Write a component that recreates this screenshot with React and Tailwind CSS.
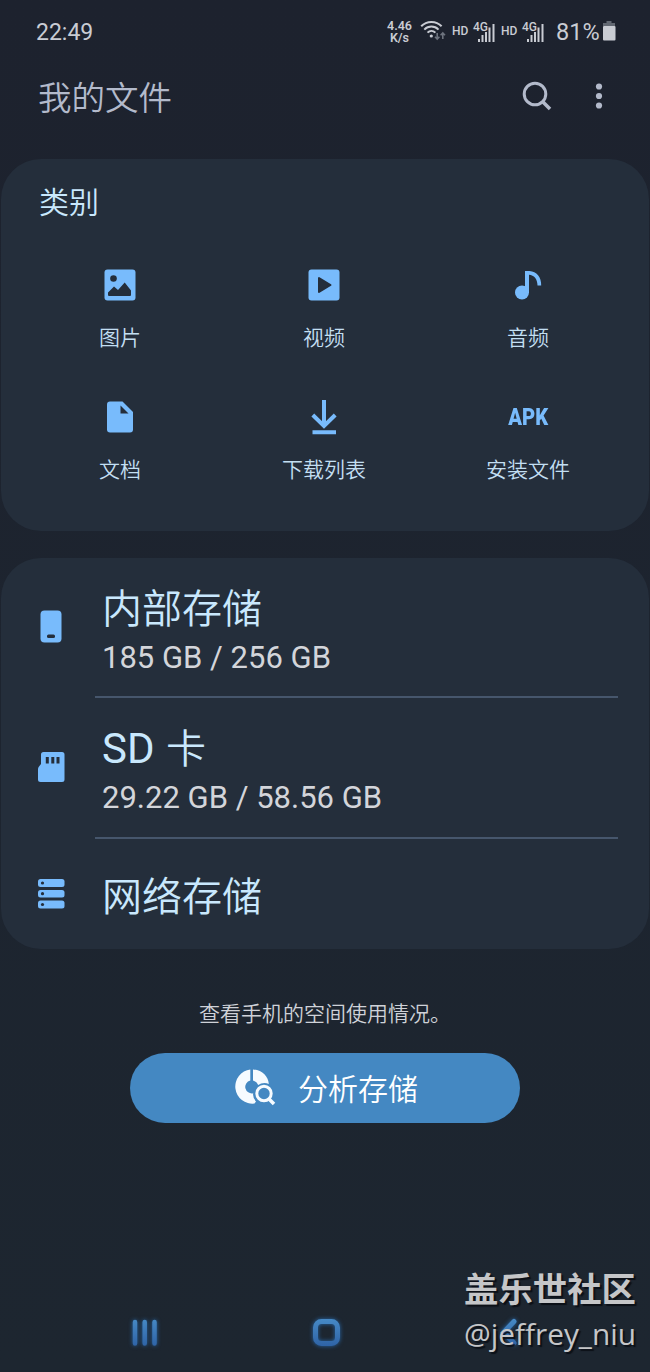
const FONT = "font-['Roboto','Noto_Sans_CJK_SC',sans-serif]"

function SignalIcon() {

  return (

    <div className="relative w-[23px] h-[22px]">

      <span className="absolute left-0 top-0 text-[12px] leading-[11px] font-medium text-[#c9ccd3]">4G</span>

      <svg viewBox="0 0 23 22" className="w-[23px] h-[22px]" fill="#c9ccd3">
        <rect x="5" y="17" width="2" height="3" />
        <rect x="8.500" y="13" width="2" height="7" />
        <rect x="12" y="10" width="2" height="10" />
        <rect x="15.500" y="5.500" width="2" height="14.500" />
        <rect x="19.500" y="2" width="2" height="18" />
      </svg>

    </div>

  )
}

function StatusBar() {

  return (

    <div className="flex items-center justify-between h-[65px] pl-[36px] pr-[34px] text-[#c9ccd3]">

      <span className="text-[23px] leading-none">22:49</span>

      <div className="flex items-center">

        <div className="w-[27px] text-center text-[12.5px] leading-[11.5px] font-semibold mr-[7px] -mt-[2px]">
          <div>4.46</div>
          <div>K/s</div>
        </div>

        <svg viewBox="0 0 27 22" className="w-[27px] h-[22px] mr-[5px] -mt-[3px]" fill="none" stroke="#c9ccd3" strokeWidth="2">
          <path d="M1.2 6.3C6.6 .5 16.2 .5 21.6 6.3" />
          <path d="M4.3 9.6c4-4 10.2-4 14.2 0" />
          <path d="M7.5 12.6c2.3-2.2 5.6-2.2 7.9 0" />
          <circle cx="11.3" cy="16" r="1.6" fill="#c9ccd3" stroke="none" />
          <g stroke="#6d737e" strokeWidth="1.6">
            <path d="M17.2 13v5.8M15 16.7l2.2 2.3 2.2-2.3" />
            <path d="M22.8 19v-5.8M20.6 15.3l2.2-2.3 2.2 2.3" />
          </g>
        </svg>

        <span className="w-[21px] -mt-[3px] text-[12px] leading-none font-medium">HD</span>
        <SignalIcon />
        <span className="w-[21px] ml-[5px] -mt-[3px] text-[12px] leading-none font-medium">HD</span>
        <SignalIcon />

        <span className="ml-[11px] w-[46px] text-[23.5px] leading-none">81%</span>

        <svg viewBox="0 0 14 20" className="w-[14px] h-[20px] -mt-[3px]">
          <path d="M4.500 0h5v2H13v3H1V2h3.500z" fill="#626872" />
          <rect x="1" y="5" width="12.500" height="14.500" rx="1" fill="#c9ccd3" />
        </svg>

      </div>

    </div>

  )
}

function Header() {

  return (

    <header className="flex items-center justify-between h-[64px] pl-[38px] pr-[47px] mb-[30px] text-[#b3bacb]">

      <h1 className="mt-[3px] text-[33.5px] leading-none font-[350]">我的文件</h1>

      <div className="flex items-center gap-[43px] -mt-[2px]">

        <svg viewBox="0 0 30 30" className="w-[30px] h-[30px]" fill="none" stroke="#b3bacb" strokeWidth="3">
          <circle cx="13" cy="13" r="10.800" />
          <path d="M20.500 20.500l7.500 7.500" strokeWidth="3.600" />
        </svg>

        <svg viewBox="0 0 8 26" className="w-[8px] h-[26px]" fill="#b3bacb">
          <circle cx="4" cy="3.500" r="3.100" />
          <circle cx="4" cy="13" r="3.100" />
          <circle cx="4" cy="22.500" r="3.100" />
        </svg>

      </div>

    </header>

  )
}

const categories = [
  {
    label: "图片",
    icon: (
      <svg viewBox="0 0 36 36" className="w-9 h-9">
        <rect x="2.500" y="2.500" width="31" height="31" rx="3" fill="#78bbfc" />
        <circle cx="11.500" cy="11.500" r="3.300" fill="#242e3b" />
        <path d="M6 28v-2.500l6-6 4 3.500 6.700-7.500 6.300 8V28q0 1-1 1H7q-1 0-1-1z" fill="#242e3b" />
      </svg>
    ),
  },
  {
    label: "视频",
    icon: (
      <svg viewBox="0 0 36 36" className="w-9 h-9">
        <rect x="2.500" y="2.500" width="31" height="31" rx="3" fill="#78bbfc" />
        <path d="M13 11v14l11.500-7z" fill="#242e3b" stroke="#242e3b" strokeWidth="2" strokeLinejoin="round" />
      </svg>
    ),
  },
  {
    label: "音频",
    icon: (
      <svg viewBox="0 0 36 36" className="w-9 h-9" fill="#78bbfc">
        <circle cx="12" cy="25.500" r="7" />
        <path d="M15 4h4.500C26.500 4.500 31.500 10 31.200 18.500H27.500C27.500 12 24 8 19 7.700V26h-4z" />
      </svg>
    ),
  },
  {
    label: "文档",
    icon: (
      <svg viewBox="0 0 36 36" className="w-9 h-9">
        <path d="M8 2.500h12.500L31 13v17.500q0 3-3 3H8q-3 0-3-3v-25q0-3 3-3z" fill="#78bbfc" />
        <path d="M18.500 6.500v8h8z" fill="#242e3b" />
      </svg>
    ),
  },
  {
    label: "下载列表",
    icon: (
      <svg viewBox="0 0 36 36" className="w-9 h-9" fill="none" stroke="#78bbfc" strokeWidth="4">
        <path d="M18 1v26.500M6.800 16L18 27l11.200-11M6.500 33.200h23.500" />
      </svg>
    ),
  },
  {
    label: "安装文件",
    icon: (
      <span className="flex items-center justify-center h-9 pt-[2px] font-['Roboto',sans-serif] text-[23.5px] leading-none font-black">
        <span className="scale-x-[0.86]">APK</span>
      </span>
    ),
  },
]

function Categories() {

  return (

    <section className="mx-px h-[372px] rounded-[40px] bg-[#242e3b] pt-[27px]">

      <h2 className="pl-[38px] text-[30px] leading-[33px] font-[350] text-[#c9e8fd]">类别</h2>

      <div className="grid grid-cols-3 pl-[17px] pr-[19px] mt-[48px]">

        {categories.map((item) => (

          <div key={item.label} className="flex flex-col items-center h-[132px] text-[#78bbfc]">

            {item.icon}

            <span className="mt-[23px] text-[21px] leading-[24px] font-[350] text-[#c3dff2]">{item.label}</span>

          </div>

        ))}

      </div>

    </section>

  )
}

function StorageList() {

  return (

    <section className="mx-px mt-[27px] h-[391px] rounded-[40px] bg-[#242e3b] text-[#c9e8fd]">

      <div className="flex h-[140px]">

        <svg viewBox="0 0 30 36" className="w-[30px] h-[36px] ml-[35px] mt-[50px]">
          <rect x="4.500" y="2.500" width="21" height="32" rx="4" fill="#78bbfc" />
          <rect x="11" y="26.500" width="8" height="3.500" rx="1.500" fill="#242e3b" />
        </svg>

        <div className="flex-1 ml-[29px] mr-[31px] pl-[7px] pt-[31px] border-b-2 border-[#46566c]">
          <p className="text-[40px] leading-[42px] font-[350]">内部存储</p>
          <p className="mt-[9px] text-[31px] leading-[36px] text-[#d3d5da]">185 GB / 256 GB</p>
        </div>

      </div>

      <div className="flex h-[141px]">

        <svg viewBox="0 0 30 36" className="w-[30px] h-[36px] ml-[35px] mt-[51px]">
          <path d="M7.500 3H26q2.500 0 2.500 2.500v25q0 2.500-2.500 2.500H4.500Q2 33 2 30.500V20q0-1.500 1-2.500l2-2.500V5.500Q5 3 7.500 3z" fill="#78bbfc" />
          <path d="M11.300 8v6.500M16.800 8v6.500M22 8v6.500" stroke="#242e3b" strokeWidth="3" />
        </svg>

        <div className="flex-1 ml-[29px] mr-[31px] pl-[7px] pt-[30px] border-b-2 border-[#46566c]">
          <p className="text-[42px] leading-[42px]">SD <span className="ml-[1px] text-[40px] leading-none font-[350]">卡</span></p>
          <p className="mt-[10px] text-[31px] leading-[36px] text-[#d3d5da]">29.22 GB / 58.56 GB</p>
        </div>

      </div>

      <div className="flex h-[110px]">

        <svg viewBox="0 0 30 36" className="w-[30px] h-[36px] ml-[35px] mt-[37px]">
          <g fill="#78bbfc">
            <rect x="2" y="3" width="26.500" height="8" rx="2.500" />
            <rect x="2" y="14" width="26.500" height="7.500" rx="2.500" />
            <rect x="2" y="24.500" width="26.500" height="8" rx="2.500" />
          </g>
          <g fill="#242e3b">
            <circle cx="6.500" cy="7" r="1.600" />
            <circle cx="6.500" cy="17.700" r="1.600" />
            <circle cx="6.500" cy="28.500" r="1.600" />
          </g>
        </svg>

        <p className="ml-[36px] mt-[38px] text-[40px] leading-[42px] font-[350]">网络存储</p>

      </div>

    </section>

  )
}

function Analyze() {

  return (

    <section className="flex flex-col items-center mt-[52px]">

      <p className="text-[21px] leading-[26px] font-[350] text-[#cfd2d8]">查看手机的空间使用情况。</p>

      <button className="flex items-center mt-[26px] w-[390px] h-[70px] rounded-full bg-[#4488c2] text-white">

        <svg viewBox="0 0 42 40" className="w-[42px] h-[40px] ml-[104px]">
          <path d="M16.300 1.500A17 17 0 0 0 20.500 35.500L22 33.500Q18.500 29.800 19.200 25.200A6.400 6.400 0 0 1 16.300 12.500z" fill="#f6fbff" />
          <path d="M19 1.500v11q4 1.200 5.200 4.500 2.600-2 6.300-2 2.200 0 4.300 1C34.500 8.500 28 2 19 1.500z" fill="#f6fbff" />
          <circle cx="30" cy="25.500" r="7.200" fill="none" stroke="#f6fbff" strokeWidth="3" />
          <path d="M35 31l5 5" stroke="#f6fbff" strokeWidth="3.500" />
        </svg>

        <span className="ml-[22px] mt-[4px] text-[30px] leading-none font-[350]">分析存储</span>

      </button>

    </section>

  )
}

function NavBar() {

  return (

    <nav className="flex-1 relative">

      <div className="flex h-[40px] mt-[190px] pl-[125px] gap-[142px]">

        <svg viewBox="0 0 40 40" className="w-[40px] h-[40px] drop-shadow-[0_0_2px_#2767a8]" fill="none" stroke="url(#navBlue)" strokeWidth="4.500" strokeLinecap="round">
          <defs>
            <linearGradient id="navBlue" gradientUnits="userSpaceOnUse" x1="0" y1="6" x2="0" y2="34">
              <stop offset="0" stopColor="#4689c5" />
              <stop offset="1" stopColor="#2e62a5" />
            </linearGradient>
          </defs>
          <path d="M10 9v21.500M19.700 9v21.500M29.500 9v21.500" />
        </svg>

        <svg viewBox="0 0 40 40" className="w-[40px] h-[40px] drop-shadow-[0_0_2px_#2767a8]" fill="none" stroke="url(#navBlue)" strokeWidth="5">
          <rect x="8.500" y="8.500" width="22" height="22" rx="6" />
        </svg>

        <svg viewBox="0 0 40 40" className="w-[40px] h-[40px] drop-shadow-[0_0_2px_#2767a8]" fill="none" stroke="url(#navBlue)" strokeWidth="5" strokeLinecap="round">
          <path d="M25 8.500L14.500 19.500 25 30" />
        </svg>

      </div>

      {/* community watermark */}
      <div className="absolute right-[14px] top-[141px] w-[172px] whitespace-nowrap text-[#c5c6c8] [text-shadow:2px_2px_1px_#0c1017]">
        <p className="font-['Noto_Sans_CJK_SC',sans-serif] text-[34.4px] leading-[46px] font-bold">盖乐世社区</p>
        <p className="font-['Open_Sans',sans-serif] text-[29.8px] leading-[48px]">@jeffrey_niu</p>
      </div>

    </nav>

  )
}

function App() {

  return (

    <div className={`${FONT} flex flex-col w-[650px] h-[1372px] overflow-hidden bg-linear-to-b from-[#1d222e] to-[#1d2630]`}>

      <StatusBar />
      <Header />
      <Categories />
      <StorageList />
      <Analyze />
      <NavBar />

    </div>

  )
}

export default App
